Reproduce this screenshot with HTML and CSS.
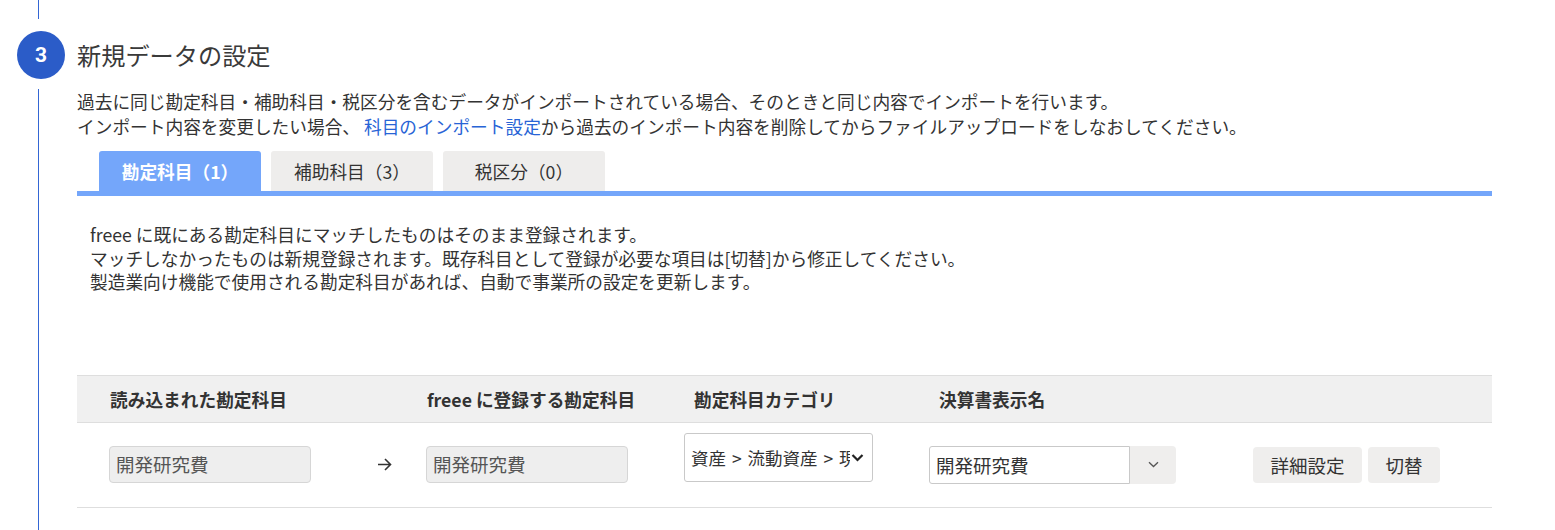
FILE: index.html
```html
<!DOCTYPE html>
<html lang="ja">
<head>
<meta charset="utf-8">
<title>新規データの設定</title>
<link rel="stylesheet" href="styles.css">
</head>
<body>
<div class="step">
  <div class="rail">
    <div class="rail-line rail-top"></div>
    <div class="step-num">3</div>
    <div class="rail-line rail-bottom"></div>
  </div>
  <div class="content">
    <h2 class="step-title">新規データの設定</h2>
    <p class="desc">過去に同じ勘定科目・補助科目・税区分を含むデータがインポートされている場合、そのときと同じ内容でインポートを行います。<br>インポート内容を変更したい場合、 <a class="link" href="#">科目のインポート設定</a>から過去のインポート内容を削除してからファイルアップロードをしなおしてください。</p>
    <div class="tabs">
      <div class="tab tab-active">勘定科目（1）</div>
      <div class="tab">補助科目（3）</div>
      <div class="tab">税区分（0）</div>
    </div>
    <p class="panel-text">freee に既にある勘定科目にマッチしたものはそのまま登録されます。<br>マッチしなかったものは新規登録されます。既存科目として登録が必要な項目は[切替]から修正してください。<br>製造業向け機能で使用される勘定科目があれば、自動で事業所の設定を更新します。</p>
    <div class="table">
      <div class="thead">
        <div class="th th-1">読み込まれた勘定科目</div>
        <div class="th"></div>
        <div class="th th-3">freee に登録する勘定科目</div>
        <div class="th th-4">勘定科目カテゴリ</div>
        <div class="th th-5">決算書表示名</div>
        <div class="th"></div>
      </div>
      <div class="trow">
        <div class="td td-1"><div class="ro-input">開発研究費</div></div>
        <div class="td td-2">
          <svg class="arrow" width="15" height="13" viewBox="0 0 15 13"><path d="M1 6.5H13.5M8 1L13.5 6.5L8 12" fill="none" stroke="#333" stroke-width="1.6"/></svg>
        </div>
        <div class="td td-3"><div class="ro-input">開発研究費</div></div>
        <div class="td td-4">
          <div class="select">
            <span class="select-text">資産 &gt; 流動資産 &gt; 現金</span>
            <svg class="select-chev" width="13" height="9" viewBox="0 0 13 9"><path d="M1.5 2L6.5 7L11.5 2" fill="none" stroke="#222" stroke-width="2.2"/></svg>
          </div>
        </div>
        <div class="td td-5">
          <div class="combo">
            <div class="combo-input">開発研究費</div>
            <div class="combo-btn"><svg width="11" height="7" viewBox="0 0 11 7"><path d="M1 1.2L5.5 5.5L10 1.2" fill="none" stroke="#555" stroke-width="1.3"/></svg></div>
          </div>
        </div>
        <div class="td td-6">
          <button class="btn btn-detail">詳細設定</button>
          <button class="btn btn-switch">切替</button>
        </div>
      </div>
    </div>
  </div>
</div>
</body>
</html>
```
FILE: styles.css
```css
* { box-sizing: border-box; }
html, body { margin: 0; padding: 0; background: #fff; }
body {
  font-family: "Noto Sans CJK JP", "Noto Sans", sans-serif;
  color: #333;
  font-size: 17.7px;
}
.step {
  display: flex;
  min-height: 530px;
}
.rail {
  width: 77px;
  flex: none;
  display: flex;
  flex-direction: column;
}
.rail-line {
  width: 1.3px;
  margin-left: 38px;
  background: #3466d4;
}
.rail-top { height: 19px; }
.rail-bottom { flex: 1; margin-top: 10px; }
.step-num {
  margin-top: 12px;
  margin-left: 17px;
  width: 48px;
  height: 48px;
  border-radius: 50%;
  background: #2b5cc8;
  color: #fff;
  font-family: Roboto, "Liberation Sans", sans-serif;
  font-weight: 700;
  font-size: 21px;
  display: flex;
  align-items: center;
  justify-content: center;
}
.content {
  width: 1415px;
  padding-top: 31px;
}
.step-title {
  margin: 0;
  height: 48px;
  line-height: 48px;
  font-size: 24.2px;
  font-weight: 400;
  color: #3a3a3a;
}
.desc {
  margin: 10px 0 0;
  line-height: 25px;
  font-size: 17.7px;
  color: #333;
}
.link { color: #2864d6; text-decoration: none; }
.tabs {
  margin-top: 12px;
  padding-left: 22px;
  display: flex;
  gap: 10px;
  border-bottom: 5px solid #74a6fa;
}
.tab {
  width: 162px;
  height: 40px;
  border-radius: 3px 3px 0 0;
  background: #eeedec;
  color: #333;
  font-size: 17.7px;
  display: flex;
  align-items: center;
  justify-content: center;
}
.tab-active {
  background: #74a6fa;
  color: #fff;
  font-weight: 700;
}
.panel-text {
  margin: 0;
  padding: 27px 13px 0;
  line-height: 23.5px;
  font-size: 17.7px;
}
.table { margin-top: 81px; }
.thead, .trow {
  display: grid;
  grid-template-columns: 284px 42px 266px 245px 315px 1fr;
}
.thead {
  height: 48px;
  background: #f0f0f0;
  border-top: 1px solid #dedede;
  border-bottom: 1px solid #dedede;
  align-items: center;
}
.th {
  font-weight: 700;
  font-size: 17.7px;
  color: #333;
}
.th-1 { padding-left: 33px; }
.th-3 { padding-left: 24px; }
.th-4 { padding-left: 25px; }
.th-5 { padding-left: 25px; }
.trow {
  height: 85px;
  border-bottom: 1px solid #dedede;
  align-items: center;
}
.td-1 { padding-left: 32px; }
.td-2 { display: flex; justify-content: center; padding-left: 4px; }
.td-3 { padding-left: 23px; }
.td-4 { padding-left: 15px; align-self: start; padding-top: 10px; }
.td-5 { padding-left: 15px; }
.td-6 { padding-left: 24px; display: flex; gap: 6px; }
.ro-input {
  width: 202px;
  height: 37px;
  background: #eeeeee;
  border: 1px solid #d6d6d6;
  border-radius: 4px;
  padding-left: 6px;
  font-size: 18.5px;
  line-height: 35px;
  color: #555;
}
.select {
  width: 189px;
  height: 49px;
  border: 1px solid #c9c9c9;
  border-radius: 3px;
  background: #fff;
  display: flex;
  align-items: center;
  padding-left: 6px;
  overflow: hidden;
}
.select-text {
  width: 159px;
  flex: none;
  overflow: hidden;
  white-space: nowrap;
  font-size: 17.5px;
  word-spacing: 2px;
  color: #333;
}
.select-chev { flex: none; margin-left: 1px; }
.combo { display: flex; }
.combo-input {
  width: 201px;
  height: 38px;
  border: 1px solid #c9c9c9;
  border-radius: 3px 0 0 3px;
  background: #fff;
  padding-left: 6px;
  font-size: 18.5px;
  line-height: 36px;
  color: #333;
}
.combo-btn {
  width: 46px;
  height: 38px;
  background: #efeeed;
  border-radius: 0 4px 4px 0;
  display: flex;
  align-items: center;
  justify-content: center;
}
.btn {
  height: 36px;
  border: none;
  border-radius: 4px;
  background: #efeeed;
  color: #333;
  font-family: "Noto Sans CJK JP", "Noto Sans", sans-serif;
  font-size: 18.5px;
  padding: 0;
}
.btn-detail { width: 109px; }
.btn-switch { width: 72px; }
```
